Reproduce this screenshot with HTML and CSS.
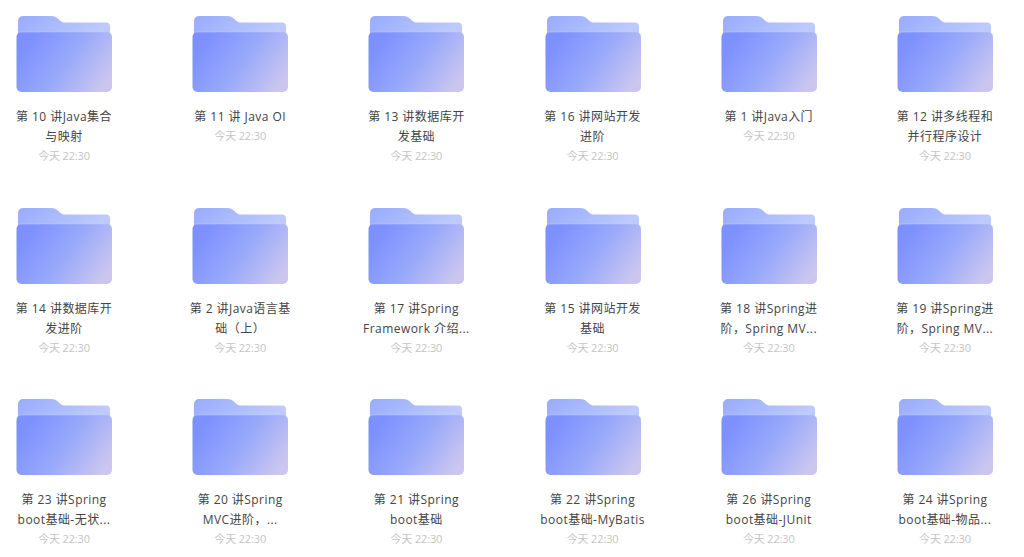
FILE: index.html
```html
<!doctype html>
<html lang="zh-CN">
  <head>
    <meta charset="UTF-8" />
    <title>文件夹</title>
    <link rel="stylesheet" href="styles.css">
  </head>
  <body>
    <svg class="defs" width="0" height="0">
      <defs>
        <linearGradient id="back" x1="0" y1="0" x2="1" y2="0.3">
          <stop offset="0" stop-color="#98abfd" />
          <stop offset="1" stop-color="#bdcbfe" />
        </linearGradient>
        <linearGradient id="front" x1="0.04" y1="0.3" x2="1" y2="0.72">
          <stop offset="0" stop-color="#7c90ff" />
          <stop offset="0.5" stop-color="#98a9fa" />
          <stop offset="1" stop-color="#ccc6ef" />
        </linearGradient>
        <symbol id="folder" viewBox="0 0 96 78">
          <path fill="url(#back)" d="M2 6a5 5 0 0 1 5-5h28c3 0 4.800 .8 6.500 2.200l2.500 2.200c1.600 1.400 3 2.100 5 2.100h41a4 4 0 0 1 4 4v12H2z" />
          <rect x=".5" y="17" width="95.500" height="60" rx="5" fill="url(#front)" />
          <rect x="2" y="16.500" width="92" height="1" fill="#c3cdff" opacity=".5" />
        </symbol>
      </defs>
    </svg>

    <main class="grid">
      <div class="item">
        <svg class="icon"><use href="#folder" /></svg>
        <div class="name">第 10 讲Java集合<br>与映射</div>
        <div class="time">今天 22:30</div>
      </div>
      <div class="item">
        <svg class="icon"><use href="#folder" /></svg>
        <div class="name">第 11 讲 Java OI</div>
        <div class="time">今天 22:30</div>
      </div>
      <div class="item">
        <svg class="icon"><use href="#folder" /></svg>
        <div class="name">第 13 讲数据库开<br>发基础</div>
        <div class="time">今天 22:30</div>
      </div>
      <div class="item">
        <svg class="icon"><use href="#folder" /></svg>
        <div class="name">第 16 讲网站开发<br>进阶</div>
        <div class="time">今天 22:30</div>
      </div>
      <div class="item">
        <svg class="icon"><use href="#folder" /></svg>
        <div class="name">第 1 讲Java入门</div>
        <div class="time">今天 22:30</div>
      </div>
      <div class="item">
        <svg class="icon"><use href="#folder" /></svg>
        <div class="name">第 12 讲多线程和<br>并行程序设计</div>
        <div class="time">今天 22:30</div>
      </div>

      <div class="item">
        <svg class="icon"><use href="#folder" /></svg>
        <div class="name">第 14 讲数据库开<br>发进阶</div>
        <div class="time">今天 22:30</div>
      </div>
      <div class="item">
        <svg class="icon"><use href="#folder" /></svg>
        <div class="name">第 2 讲Java语言基<br>础（上）</div>
        <div class="time">今天 22:30</div>
      </div>
      <div class="item">
        <svg class="icon"><use href="#folder" /></svg>
        <div class="name">第 17 讲Spring<br>Framework 介绍...</div>
        <div class="time">今天 22:30</div>
      </div>
      <div class="item">
        <svg class="icon"><use href="#folder" /></svg>
        <div class="name">第 15 讲网站开发<br>基础</div>
        <div class="time">今天 22:30</div>
      </div>
      <div class="item">
        <svg class="icon"><use href="#folder" /></svg>
        <div class="name">第 18 讲Spring进<br>阶，Spring MV...</div>
        <div class="time">今天 22:30</div>
      </div>
      <div class="item">
        <svg class="icon"><use href="#folder" /></svg>
        <div class="name">第 19 讲Spring进<br>阶，Spring MV...</div>
        <div class="time">今天 22:30</div>
      </div>

      <div class="item">
        <svg class="icon"><use href="#folder" /></svg>
        <div class="name">第 23 讲Spring<br>boot基础-无状...</div>
        <div class="time">今天 22:30</div>
      </div>
      <div class="item">
        <svg class="icon"><use href="#folder" /></svg>
        <div class="name">第 20 讲Spring<br>MVC进阶，...</div>
        <div class="time">今天 22:30</div>
      </div>
      <div class="item">
        <svg class="icon"><use href="#folder" /></svg>
        <div class="name">第 21 讲Spring<br>boot基础</div>
        <div class="time">今天 22:30</div>
      </div>
      <div class="item">
        <svg class="icon"><use href="#folder" /></svg>
        <div class="name">第 22 讲Spring<br>boot基础-MyBatis</div>
        <div class="time">今天 22:30</div>
      </div>
      <div class="item">
        <svg class="icon"><use href="#folder" /></svg>
        <div class="name">第 26 讲Spring<br>boot基础-JUnit</div>
        <div class="time">今天 22:30</div>
      </div>
      <div class="item">
        <svg class="icon"><use href="#folder" /></svg>
        <div class="name">第 24 讲Spring<br>boot基础-物品...</div>
        <div class="time">今天 22:30</div>
      </div>
    </main>
  </body>
</html>
```

FILE: styles.css
```css
html {
  height: 100%;
}

body {
  margin: 0;
  background: #fff;
  font-family: "Open Sans", "Noto Sans CJK SC", sans-serif;
}

.defs {
  display: block;
  height: 0;
}

.grid {
  display: grid;
  grid-template-columns: repeat(6, 128px);
  grid-template-rows: 191.5px 191.5px auto;
  column-gap: 48.2px;
  padding-top: 15px;
}

.item {
  display: flex;
  flex-direction: column;
  align-items: center;
}

.icon {
  display: block;
  width: 96px;
  height: 78px;
  flex: none;
}

.name {
  margin-top: 14px;
  font-size: 12px;
  line-height: 20px;
  letter-spacing: 0.45px;
  color: #444;
  text-align: center;
  white-space: nowrap;
}

.time {
  font-size: 11px;
  line-height: 18px;
  letter-spacing: -0.15px;
  color: #c4c4c4;
  text-align: center;
}
```
